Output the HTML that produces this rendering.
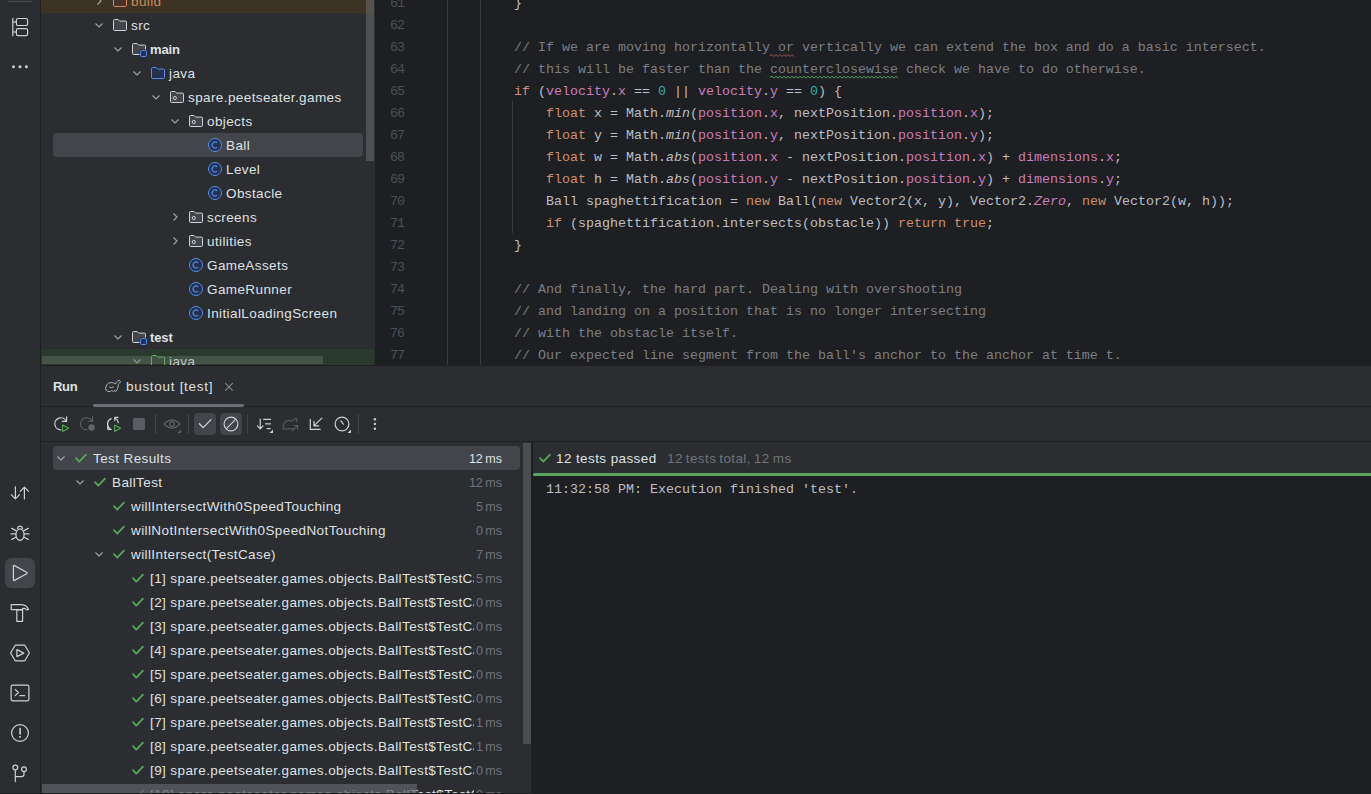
<!DOCTYPE html>
<html><head><meta charset="utf-8">
<style>
*{box-sizing:border-box;margin:0;padding:0}
html,body{width:1371px;height:794px;overflow:hidden;background:#2b2d30;font-family:"Liberation Sans",sans-serif;position:relative}
.abs{position:absolute}
svg{position:absolute;overflow:visible}
.row{position:absolute;height:24px;line-height:26px;font-size:13.5px;letter-spacing:0.4px;color:#dfe1e5;white-space:nowrap}
.code{position:absolute;left:75px;height:22px;line-height:24px;font-family:"Liberation Mono",monospace;font-size:13.33px;color:#bcbec4;white-space:pre}
.ln{position:absolute;left:0;width:31px;text-align:right;height:22px;line-height:24px;font-family:"Liberation Mono",monospace;font-size:13.33px;color:#4b5059;white-space:pre}
.k{color:#cf8e6d}.f{color:#c77dbb}.n{color:#2aacb8}.c{color:#7a7e85}.i{font-style:italic}
.tm{position:absolute;height:24px;line-height:26px;font-size:12.5px;color:#6f737a;white-space:nowrap;text-align:right;word-spacing:-3px;background:#2b2d30;padding-left:2px}
</style></head><body>

<div class="abs" style="left:0;top:0;width:40px;height:794px;background:#2b2d30"></div>
<div class="abs" style="left:40px;top:0;width:1px;height:794px;background:#1e1f22"></div>
<div class="abs" style="left:41px;top:0;width:334px;height:365px;background:#2b2d30;overflow:hidden">
<div class="abs" style="left:0;top:0;width:333px;height:13px;background:#3d3325"></div>
<div class="abs" style="left:0;top:349px;width:333px;height:16px;background:#2a3a2c"></div>
<div class="abs" style="left:12px;top:133px;width:310px;height:24px;background:#43454a;border-radius:4px"></div>
<svg style="left:55.5px;top:-3px" width="5" height="8"><path d="M0.5 0.5L4 4L0.5 7.5" fill="none" stroke="#a0a4ab" stroke-width="1.1"/></svg>
<svg style="left:71px;top:-7px" width="16" height="16" viewBox="0 0 16 16"><path d="M1.5 3.5a1 1 0 0 1 1-1h3.6l1.6 1.6h5.8a1 1 0 0 1 1 1v7.4a1 1 0 0 1-1 1h-11a1 1 0 0 1-1-1z" fill="#45322b" stroke="#d88b5e" stroke-width="1"/></svg>
<div class="row" style="left:90px;top:-11px;color:#cf8a5c;">build</div>
<svg style="left:54px;top:22.5px" width="8" height="5"><path d="M0.5 0.5L4 4L7.5 0.5" fill="none" stroke="#a0a4ab" stroke-width="1.1"/></svg>
<svg style="left:71px;top:17px" width="16" height="16" viewBox="0 0 16 16"><path d="M1.5 3.5a1 1 0 0 1 1-1h3.6l1.6 1.6h5.8a1 1 0 0 1 1 1v7.4a1 1 0 0 1-1 1h-11a1 1 0 0 1-1-1z" fill="#43454a" stroke="#ced0d6" stroke-width="1"/></svg>
<div class="row" style="left:90px;top:13px;">src</div>
<svg style="left:73px;top:46.5px" width="8" height="5"><path d="M0.5 0.5L4 4L7.5 0.5" fill="none" stroke="#a0a4ab" stroke-width="1.1"/></svg>
<svg style="left:90px;top:41px" width="16" height="16" viewBox="0 0 16 16"><path d="M1.5 3.5a1 1 0 0 1 1-1h3.6l1.6 1.6h5.8a1 1 0 0 1 1 1v7.4a1 1 0 0 1-1 1h-11a1 1 0 0 1-1-1z" fill="#43454a" stroke="#ced0d6" stroke-width="1"/><rect x="8.5" y="8.5" width="7.5" height="7.5" rx="1.5" fill="#2b2d30"/><rect x="9.5" y="9.5" width="6" height="6" rx="1.2" fill="#25324d" stroke="#548af7" stroke-width="1"/></svg>
<div class="row" style="left:109px;top:37px;font-weight:700;font-size:13px;letter-spacing:-0.1px;">main</div>
<svg style="left:92px;top:70.5px" width="8" height="5"><path d="M0.5 0.5L4 4L7.5 0.5" fill="none" stroke="#a0a4ab" stroke-width="1.1"/></svg>
<svg style="left:109px;top:65px" width="16" height="16" viewBox="0 0 16 16"><path d="M1.5 3.5a1 1 0 0 1 1-1h3.6l1.6 1.6h5.8a1 1 0 0 1 1 1v7.4a1 1 0 0 1-1 1h-11a1 1 0 0 1-1-1z" fill="#25324d" stroke="#548af7" stroke-width="1"/></svg>
<div class="row" style="left:128px;top:61px;">java</div>
<svg style="left:111px;top:94.5px" width="8" height="5"><path d="M0.5 0.5L4 4L7.5 0.5" fill="none" stroke="#a0a4ab" stroke-width="1.1"/></svg>
<svg style="left:128px;top:89px" width="16" height="16" viewBox="0 0 16 16"><path d="M1.5 3.5a1 1 0 0 1 1-1h3.6l1.6 1.6h5.8a1 1 0 0 1 1 1v7.4a1 1 0 0 1-1 1h-11a1 1 0 0 1-1-1z" fill="#43454a" stroke="#ced0d6" stroke-width="1"/><circle cx="5.8" cy="9" r="1.6" fill="none" stroke="#ced0d6" stroke-width="1"/></svg>
<div class="row" style="left:147px;top:85px;">spare.peetseater.games</div>
<svg style="left:130px;top:118.5px" width="8" height="5"><path d="M0.5 0.5L4 4L7.5 0.5" fill="none" stroke="#a0a4ab" stroke-width="1.1"/></svg>
<svg style="left:147px;top:113px" width="16" height="16" viewBox="0 0 16 16"><path d="M1.5 3.5a1 1 0 0 1 1-1h3.6l1.6 1.6h5.8a1 1 0 0 1 1 1v7.4a1 1 0 0 1-1 1h-11a1 1 0 0 1-1-1z" fill="#43454a" stroke="#ced0d6" stroke-width="1"/><circle cx="5.8" cy="9" r="1.6" fill="none" stroke="#ced0d6" stroke-width="1"/></svg>
<div class="row" style="left:166px;top:109px;">objects</div>
<svg style="left:166px;top:137px" width="16" height="16" viewBox="0 0 16 16"><circle cx="8" cy="8" r="6.5" fill="#25324d" stroke="#548af7" stroke-width="1"/><path d="M10.2 5.8a3 3 0 1 0 0 4.4" fill="none" stroke="#548af7" stroke-width="1.1"/></svg>
<div class="row" style="left:185px;top:133px;">Ball</div>
<svg style="left:166px;top:161px" width="16" height="16" viewBox="0 0 16 16"><circle cx="8" cy="8" r="6.5" fill="#25324d" stroke="#548af7" stroke-width="1"/><path d="M10.2 5.8a3 3 0 1 0 0 4.4" fill="none" stroke="#548af7" stroke-width="1.1"/></svg>
<div class="row" style="left:185px;top:157px;">Level</div>
<svg style="left:166px;top:185px" width="16" height="16" viewBox="0 0 16 16"><circle cx="8" cy="8" r="6.5" fill="#25324d" stroke="#548af7" stroke-width="1"/><path d="M10.2 5.8a3 3 0 1 0 0 4.4" fill="none" stroke="#548af7" stroke-width="1.1"/></svg>
<div class="row" style="left:185px;top:181px;">Obstacle</div>
<svg style="left:131.5px;top:213px" width="5" height="8"><path d="M0.5 0.5L4 4L0.5 7.5" fill="none" stroke="#a0a4ab" stroke-width="1.1"/></svg>
<svg style="left:147px;top:209px" width="16" height="16" viewBox="0 0 16 16"><path d="M1.5 3.5a1 1 0 0 1 1-1h3.6l1.6 1.6h5.8a1 1 0 0 1 1 1v7.4a1 1 0 0 1-1 1h-11a1 1 0 0 1-1-1z" fill="#43454a" stroke="#ced0d6" stroke-width="1"/><circle cx="5.8" cy="9" r="1.6" fill="none" stroke="#ced0d6" stroke-width="1"/></svg>
<div class="row" style="left:166px;top:205px;">screens</div>
<svg style="left:131.5px;top:237px" width="5" height="8"><path d="M0.5 0.5L4 4L0.5 7.5" fill="none" stroke="#a0a4ab" stroke-width="1.1"/></svg>
<svg style="left:147px;top:233px" width="16" height="16" viewBox="0 0 16 16"><path d="M1.5 3.5a1 1 0 0 1 1-1h3.6l1.6 1.6h5.8a1 1 0 0 1 1 1v7.4a1 1 0 0 1-1 1h-11a1 1 0 0 1-1-1z" fill="#43454a" stroke="#ced0d6" stroke-width="1"/><circle cx="5.8" cy="9" r="1.6" fill="none" stroke="#ced0d6" stroke-width="1"/></svg>
<div class="row" style="left:166px;top:229px;">utilities</div>
<svg style="left:147px;top:257px" width="16" height="16" viewBox="0 0 16 16"><circle cx="8" cy="8" r="6.5" fill="#25324d" stroke="#548af7" stroke-width="1"/><path d="M10.2 5.8a3 3 0 1 0 0 4.4" fill="none" stroke="#548af7" stroke-width="1.1"/></svg>
<div class="row" style="left:166px;top:253px;">GameAssets</div>
<svg style="left:147px;top:281px" width="16" height="16" viewBox="0 0 16 16"><circle cx="8" cy="8" r="6.5" fill="#25324d" stroke="#548af7" stroke-width="1"/><path d="M10.2 5.8a3 3 0 1 0 0 4.4" fill="none" stroke="#548af7" stroke-width="1.1"/></svg>
<div class="row" style="left:166px;top:277px;">GameRunner</div>
<svg style="left:147px;top:305px" width="16" height="16" viewBox="0 0 16 16"><circle cx="8" cy="8" r="6.5" fill="#25324d" stroke="#548af7" stroke-width="1"/><path d="M10.2 5.8a3 3 0 1 0 0 4.4" fill="none" stroke="#548af7" stroke-width="1.1"/></svg>
<div class="row" style="left:166px;top:301px;">InitialLoadingScreen</div>
<svg style="left:73px;top:334.5px" width="8" height="5"><path d="M0.5 0.5L4 4L7.5 0.5" fill="none" stroke="#a0a4ab" stroke-width="1.1"/></svg>
<svg style="left:90px;top:329px" width="16" height="16" viewBox="0 0 16 16"><path d="M1.5 3.5a1 1 0 0 1 1-1h3.6l1.6 1.6h5.8a1 1 0 0 1 1 1v7.4a1 1 0 0 1-1 1h-11a1 1 0 0 1-1-1z" fill="#43454a" stroke="#ced0d6" stroke-width="1"/><rect x="8.5" y="8.5" width="7.5" height="7.5" rx="1.5" fill="#2b2d30"/><rect x="9.5" y="9.5" width="6" height="6" rx="1.2" fill="#25324d" stroke="#548af7" stroke-width="1"/></svg>
<div class="row" style="left:109px;top:325px;font-weight:700;font-size:13px;letter-spacing:-0.1px;">test</div>
<svg style="left:92px;top:358.5px" width="8" height="5"><path d="M0.5 0.5L4 4L7.5 0.5" fill="none" stroke="#a0a4ab" stroke-width="1.1"/></svg>
<svg style="left:109px;top:353px" width="16" height="16" viewBox="0 0 16 16"><path d="M1.5 3.5a1 1 0 0 1 1-1h3.6l1.6 1.6h5.8a1 1 0 0 1 1 1v7.4a1 1 0 0 1-1 1h-11a1 1 0 0 1-1-1z" fill="#253627" stroke="#5fb865" stroke-width="1"/></svg>
<div class="row" style="left:128px;top:349px;">java</div>
<div class="abs" style="left:1px;top:356px;width:281px;height:8px;background:rgba(120,130,120,0.35)"></div>
<div class="abs" style="left:325px;top:0;width:8px;height:161px;background:rgba(111,113,118,0.5)"></div>
</div>
<div class="abs" style="left:375px;top:0;width:996px;height:365px;background:#1e1f22;overflow:hidden">
<div class="abs" style="left:72px;top:0;width:1px;height:365px;background:#393b40"></div>
<div class="abs" style="left:105px;top:0;width:1px;height:365px;background:#393b40"></div>
<div class="abs" style="left:137px;top:101px;width:1px;height:132px;background:#393b40"></div>
<div class="ln" style="left:1px;width:28px;letter-spacing:-1px;top:-8.2px">61</div>
<div class="code" style="top:-8.2px">        }</div>
<div class="ln" style="left:1px;width:28px;letter-spacing:-1px;top:13.8px">62</div>
<div class="code" style="top:13.8px"></div>
<div class="ln" style="left:1px;width:28px;letter-spacing:-1px;top:35.8px">63</div>
<div class="code" style="top:35.8px">        <span class="c">// If we are moving horizontally or vertically we can extend the box and do a basic intersect.</span></div>
<div class="ln" style="left:1px;width:28px;letter-spacing:-1px;top:57.8px">64</div>
<div class="code" style="top:57.8px">        <span class="c">// this will be faster than the counterclosewise check we have to do otherwise.</span></div>
<div class="ln" style="left:1px;width:28px;letter-spacing:-1px;top:79.8px">65</div>
<div class="code" style="top:79.8px">        <span class="k">if</span> (<span class="f">velocity</span>.<span class="f">x</span> == <span class="n">0</span> || <span class="f">velocity</span>.<span class="f">y</span> == <span class="n">0</span>) {</div>
<div class="ln" style="left:1px;width:28px;letter-spacing:-1px;top:101.8px">66</div>
<div class="code" style="top:101.8px">            <span class="k">float</span> x = Math.<span class="i">min</span>(<span class="f">position</span>.<span class="f">x</span>, nextPosition.<span class="f">position</span>.<span class="f">x</span>);</div>
<div class="ln" style="left:1px;width:28px;letter-spacing:-1px;top:123.80000000000001px">67</div>
<div class="code" style="top:123.80000000000001px">            <span class="k">float</span> y = Math.<span class="i">min</span>(<span class="f">position</span>.<span class="f">y</span>, nextPosition.<span class="f">position</span>.<span class="f">y</span>);</div>
<div class="ln" style="left:1px;width:28px;letter-spacing:-1px;top:145.8px">68</div>
<div class="code" style="top:145.8px">            <span class="k">float</span> w = Math.<span class="i">abs</span>(<span class="f">position</span>.<span class="f">x</span> - nextPosition.<span class="f">position</span>.<span class="f">x</span>) + <span class="f">dimensions</span>.<span class="f">x</span>;</div>
<div class="ln" style="left:1px;width:28px;letter-spacing:-1px;top:167.8px">69</div>
<div class="code" style="top:167.8px">            <span class="k">float</span> h = Math.<span class="i">abs</span>(<span class="f">position</span>.<span class="f">y</span> - nextPosition.<span class="f">position</span>.<span class="f">y</span>) + <span class="f">dimensions</span>.<span class="f">y</span>;</div>
<div class="ln" style="left:1px;width:28px;letter-spacing:-1px;top:189.8px">70</div>
<div class="code" style="top:189.8px">            Ball spaghettification = <span class="k">new</span> Ball(<span class="k">new</span> Vector2(x, y), Vector2.<span class="f i">Zero</span>, <span class="k">new</span> Vector2(w, h));</div>
<div class="ln" style="left:1px;width:28px;letter-spacing:-1px;top:211.8px">71</div>
<div class="code" style="top:211.8px">            <span class="k">if</span> (spaghettification.intersects(obstacle)) <span class="k">return true</span>;</div>
<div class="ln" style="left:1px;width:28px;letter-spacing:-1px;top:233.8px">72</div>
<div class="code" style="top:233.8px">        }</div>
<div class="ln" style="left:1px;width:28px;letter-spacing:-1px;top:255.8px">73</div>
<div class="code" style="top:255.8px"></div>
<div class="ln" style="left:1px;width:28px;letter-spacing:-1px;top:277.8px">74</div>
<div class="code" style="top:277.8px">        <span class="c">// And finally, the hard part. Dealing with overshooting</span></div>
<div class="ln" style="left:1px;width:28px;letter-spacing:-1px;top:299.8px">75</div>
<div class="code" style="top:299.8px">        <span class="c">// and landing on a position that is no longer intersecting</span></div>
<div class="ln" style="left:1px;width:28px;letter-spacing:-1px;top:321.8px">76</div>
<div class="code" style="top:321.8px">        <span class="c">// with the obstacle itself.</span></div>
<div class="ln" style="left:1px;width:28px;letter-spacing:-1px;top:343.8px">77</div>
<div class="code" style="top:343.8px">        <span class="c">// Our expected line segment from the ball's anchor to the anchor at time t.</span></div>
<svg style="left:0;top:0" width="997" height="365"><path d="M395 55.5L397 54.5L399 56.5L401 54.5L403 56.5L405 54.5L407 56.5L409 54.5L411 56.5L413 54.5L415 56.5L417 54.5L419 56.5" fill="none" stroke="#a8545a" stroke-width="1"/></svg>
<svg style="left:0;top:0" width="997" height="365"><path d="M395 77.2L397 76.2L399 78.2L401 76.2L403 78.2L405 76.2L407 78.2L409 76.2L411 78.2L413 76.2L415 78.2L417 76.2L419 78.2L421 76.2L423 78.2L425 76.2L427 78.2L429 76.2L431 78.2L433 76.2L435 78.2L437 76.2L439 78.2L441 76.2L443 78.2L445 76.2L447 78.2L449 76.2L451 78.2L453 76.2L455 78.2L457 76.2L459 78.2L461 76.2L463 78.2L465 76.2L467 78.2L469 76.2L471 78.2L473 76.2L475 78.2L477 76.2L479 78.2L481 76.2L483 78.2L485 76.2L487 78.2L489 76.2L491 78.2L493 76.2L495 78.2L497 76.2L499 78.2L501 76.2L503 78.2L505 76.2L507 78.2L509 76.2L511 78.2L513 76.2L515 78.2L517 76.2L519 78.2L521 76.2L523 78.2" fill="none" stroke="#5ba56a" stroke-width="1"/></svg>
</div>
<div class="abs" style="left:41px;top:365px;width:1330px;height:1px;background:#1e1f22"></div>
<div class="abs" style="left:41px;top:366px;width:1330px;height:428px;background:#2b2d30;overflow:hidden">
<div class="row" style="left:12px;top:8px;font-weight:700;font-size:13px;letter-spacing:-0.3px">Run</div>
<div class="row" style="left:85px;top:8px;letter-spacing:0.7px">bustout [test]</div>
<div class="abs" style="left:0;top:40px;width:1330px;height:1px;background:#1e1f22"></div>
<div class="abs" style="left:52px;top:38px;width:151px;height:3px;border-radius:2px;background:#6b6e75"></div>
<div class="abs" style="left:0;top:75px;width:1330px;height:1px;background:#1e1f22"></div>
<div class="abs" style="left:153px;top:47px;width:22px;height:22px;border-radius:4px;background:#43454a"></div>
<div class="abs" style="left:179px;top:47px;width:22px;height:22px;border-radius:4px;background:#43454a"></div>
<div class="abs" style="left:490px;top:76px;width:2px;height:400px;background:#1e1f22"></div>
<div class="abs" style="left:492px;top:110px;width:900px;height:400px;background:#1e1f22"></div>
<div class="abs" style="left:492px;top:107px;width:900px;height:3px;border-radius:2px 0 0 2px;background:#58a55f"></div>
<div class="row" style="left:515px;top:80px">12 tests passed</div>
<div class="row" style="left:626px;top:80px;color:#6f737a;word-spacing:-1.2px">12 tests total, 12 ms</div>
<svg style="left:497.50000000000006px;top:87px" width="12" height="10"><path d="M1 5.2L4.3 8.6L10.9 1.6" fill="none" stroke="#58a660" stroke-width="1.8" stroke-linecap="round" stroke-linejoin="round"/></svg>
<div class="code" style="left:505px;top:111.5px;color:#bcbec4">11:32:58 PM: Execution finished 'test'.</div>
<div class="abs" style="left:12px;top:80px;width:467px;height:24px;border-radius:4px;background:#43454a"></div>
<svg style="left:16px;top:89.5px" width="8" height="5"><path d="M0.5 0.5L4 4L7.5 0.5" fill="none" stroke="#a0a4ab" stroke-width="1.1"/></svg>
<svg style="left:34.3px;top:87px" width="12" height="10"><path d="M1 5.2L4.3 8.6L10.9 1.6" fill="none" stroke="#58a660" stroke-width="1.8" stroke-linecap="round" stroke-linejoin="round"/></svg>
<div class="row" style="left:52px;top:80px;width:381px;overflow:hidden">Test Results</div>
<div class="tm" style="right:869px;top:80px;color:#dfe1e5;background:#43454a">12 ms</div>
<svg style="left:35px;top:113.5px" width="8" height="5"><path d="M0.5 0.5L4 4L7.5 0.5" fill="none" stroke="#a0a4ab" stroke-width="1.1"/></svg>
<svg style="left:53.3px;top:111px" width="12" height="10"><path d="M1 5.2L4.3 8.6L10.9 1.6" fill="none" stroke="#58a660" stroke-width="1.8" stroke-linecap="round" stroke-linejoin="round"/></svg>
<div class="row" style="left:71px;top:104px;width:362px;overflow:hidden">BallTest</div>
<div class="tm" style="right:869px;top:104px;color:#6f737a;background:#2b2d30">12 ms</div>
<svg style="left:72.3px;top:135px" width="12" height="10"><path d="M1 5.2L4.3 8.6L10.9 1.6" fill="none" stroke="#58a660" stroke-width="1.8" stroke-linecap="round" stroke-linejoin="round"/></svg>
<div class="row" style="left:90px;top:128px;width:343px;overflow:hidden">willIntersectWith0SpeedTouching</div>
<div class="tm" style="right:869px;top:128px;color:#6f737a;background:#2b2d30">5 ms</div>
<svg style="left:72.3px;top:159px" width="12" height="10"><path d="M1 5.2L4.3 8.6L10.9 1.6" fill="none" stroke="#58a660" stroke-width="1.8" stroke-linecap="round" stroke-linejoin="round"/></svg>
<div class="row" style="left:90px;top:152px;width:343px;overflow:hidden">willNotIntersectWith0SpeedNotTouching</div>
<div class="tm" style="right:869px;top:152px;color:#6f737a;background:#2b2d30">0 ms</div>
<svg style="left:54px;top:185.5px" width="8" height="5"><path d="M0.5 0.5L4 4L7.5 0.5" fill="none" stroke="#a0a4ab" stroke-width="1.1"/></svg>
<svg style="left:72.3px;top:183px" width="12" height="10"><path d="M1 5.2L4.3 8.6L10.9 1.6" fill="none" stroke="#58a660" stroke-width="1.8" stroke-linecap="round" stroke-linejoin="round"/></svg>
<div class="row" style="left:90px;top:176px;width:343px;overflow:hidden">willIntersect(TestCase)</div>
<div class="tm" style="right:869px;top:176px;color:#6f737a;background:#2b2d30">7 ms</div>
<svg style="left:91.3px;top:207px" width="12" height="10"><path d="M1 5.2L4.3 8.6L10.9 1.6" fill="none" stroke="#58a660" stroke-width="1.8" stroke-linecap="round" stroke-linejoin="round"/></svg>
<div class="row" style="left:109px;top:200px;width:324px;overflow:hidden">[1] spare.peetseater.games.objects.BallTest$TestCase</div>
<div class="tm" style="right:869px;top:200px;color:#6f737a;background:#2b2d30">5 ms</div>
<svg style="left:91.3px;top:231px" width="12" height="10"><path d="M1 5.2L4.3 8.6L10.9 1.6" fill="none" stroke="#58a660" stroke-width="1.8" stroke-linecap="round" stroke-linejoin="round"/></svg>
<div class="row" style="left:109px;top:224px;width:324px;overflow:hidden">[2] spare.peetseater.games.objects.BallTest$TestCase</div>
<div class="tm" style="right:869px;top:224px;color:#6f737a;background:#2b2d30">0 ms</div>
<svg style="left:91.3px;top:255px" width="12" height="10"><path d="M1 5.2L4.3 8.6L10.9 1.6" fill="none" stroke="#58a660" stroke-width="1.8" stroke-linecap="round" stroke-linejoin="round"/></svg>
<div class="row" style="left:109px;top:248px;width:324px;overflow:hidden">[3] spare.peetseater.games.objects.BallTest$TestCase</div>
<div class="tm" style="right:869px;top:248px;color:#6f737a;background:#2b2d30">0 ms</div>
<svg style="left:91.3px;top:279px" width="12" height="10"><path d="M1 5.2L4.3 8.6L10.9 1.6" fill="none" stroke="#58a660" stroke-width="1.8" stroke-linecap="round" stroke-linejoin="round"/></svg>
<div class="row" style="left:109px;top:272px;width:324px;overflow:hidden">[4] spare.peetseater.games.objects.BallTest$TestCase</div>
<div class="tm" style="right:869px;top:272px;color:#6f737a;background:#2b2d30">0 ms</div>
<svg style="left:91.3px;top:303px" width="12" height="10"><path d="M1 5.2L4.3 8.6L10.9 1.6" fill="none" stroke="#58a660" stroke-width="1.8" stroke-linecap="round" stroke-linejoin="round"/></svg>
<div class="row" style="left:109px;top:296px;width:324px;overflow:hidden">[5] spare.peetseater.games.objects.BallTest$TestCase</div>
<div class="tm" style="right:869px;top:296px;color:#6f737a;background:#2b2d30">0 ms</div>
<svg style="left:91.3px;top:327px" width="12" height="10"><path d="M1 5.2L4.3 8.6L10.9 1.6" fill="none" stroke="#58a660" stroke-width="1.8" stroke-linecap="round" stroke-linejoin="round"/></svg>
<div class="row" style="left:109px;top:320px;width:324px;overflow:hidden">[6] spare.peetseater.games.objects.BallTest$TestCase</div>
<div class="tm" style="right:869px;top:320px;color:#6f737a;background:#2b2d30">0 ms</div>
<svg style="left:91.3px;top:351px" width="12" height="10"><path d="M1 5.2L4.3 8.6L10.9 1.6" fill="none" stroke="#58a660" stroke-width="1.8" stroke-linecap="round" stroke-linejoin="round"/></svg>
<div class="row" style="left:109px;top:344px;width:324px;overflow:hidden">[7] spare.peetseater.games.objects.BallTest$TestCase</div>
<div class="tm" style="right:869px;top:344px;color:#6f737a;background:#2b2d30">1 ms</div>
<svg style="left:91.3px;top:375px" width="12" height="10"><path d="M1 5.2L4.3 8.6L10.9 1.6" fill="none" stroke="#58a660" stroke-width="1.8" stroke-linecap="round" stroke-linejoin="round"/></svg>
<div class="row" style="left:109px;top:368px;width:324px;overflow:hidden">[8] spare.peetseater.games.objects.BallTest$TestCase</div>
<div class="tm" style="right:869px;top:368px;color:#6f737a;background:#2b2d30">1 ms</div>
<svg style="left:91.3px;top:399px" width="12" height="10"><path d="M1 5.2L4.3 8.6L10.9 1.6" fill="none" stroke="#58a660" stroke-width="1.8" stroke-linecap="round" stroke-linejoin="round"/></svg>
<div class="row" style="left:109px;top:392px;width:324px;overflow:hidden">[9] spare.peetseater.games.objects.BallTest$TestCase</div>
<div class="tm" style="right:869px;top:392px;color:#6f737a;background:#2b2d30">0 ms</div>
<svg style="left:91.3px;top:423px" width="12" height="10"><path d="M1 5.2L4.3 8.6L10.9 1.6" fill="none" stroke="#58a660" stroke-width="1.8" stroke-linecap="round" stroke-linejoin="round"/></svg>
<div class="row" style="left:109px;top:416px;width:324px;overflow:hidden">[10] spare.peetseater.games.objects.BallTest$TestCase</div>
<div class="tm" style="right:869px;top:416px;color:#6f737a;background:#2b2d30">0 ms</div>
<div class="abs" style="left:482px;top:77px;width:8px;height:301px;background:#4b4d51"></div>
<div class="abs" style="left:1px;top:418px;width:375px;height:9px;background:rgba(96,99,104,0.72)"></div>
</div>
<div class="abs" style="left:8px;top:1px;width:24px;height:1px;background:#4a4c51"></div>
<svg style="left:0px;top:0px" width="40" height="80" viewBox="0 0 40 80"><g fill="none" stroke="#ced0d6" stroke-width="1.2"><path d="M12.8 17.9V36.2"/><path d="M12.8 22H16"/><path d="M12.8 32H16"/><rect x="16.4" y="18.5" width="11.2" height="7" rx="1.6"/><rect x="16.4" y="28.6" width="11.2" height="7" rx="1.6"/></g><g fill="#ced0d6"><circle cx="13.5" cy="66.8" r="1.5"/><circle cx="20" cy="66.8" r="1.5"/><circle cx="26.4" cy="66.8" r="1.5"/></g></svg>
<div class="abs" style="left:5px;top:558px;width:30px;height:30px;border-radius:6px;background:#43454a"></div>
<svg style="left:0px;top:0px" width="40" height="794" viewBox="0 0 40 794"><g fill="none" stroke="#ced0d6" stroke-width="1.2" stroke-linecap="round" stroke-linejoin="round"><path d="M15.4 486.8V498.8M11.3 494.6L15.4 498.8L19.5 494.6"/><path d="M24.4 487.2V499M20.3 491.3L24.4 487.2L28.5 491.3"/><path d="M17.5 528.3A2.6 2.6 0 0 1 22.6 528.3"/><ellipse cx="20" cy="534.6" rx="4.1" ry="5.8"/><path d="M11.8 528.4L15.9 530.6M11 533.8H15.8M11.8 539.4L15.9 537.2"/><path d="M28.2 528.4L24.1 530.6M29 533.8H24.2M28.2 539.4L24.1 537.2"/><path d="M13.4 566.3Q13.4 565 14.5 565.6L26.7 572.2Q27.6 573 26.7 573.8L14.5 580.4Q13.4 581 13.4 579.7Z"/><path d="M11.2 604.6H20.5Q26.5 604.6 28.6 609.4L26.8 609.8Q25 607.8 22.6 608.6V609.6H11.2Z"/><path d="M16.8 609.8H22.6V621.3H16.8Z"/><path d="M15.2 645.2H24.8L29.4 653L24.8 660.8H15.2L10.6 653Z"/><path d="M16.9 649.6V656.6L23.8 653.1Z"/><rect x="11.1" y="685.2" width="17.8" height="15.6" rx="1.6"/><path d="M15.2 689.4L18.4 692.5L15.2 695.6M19.8 695.7H24.6"/><circle cx="20" cy="733" r="8.4"/></g><g fill="#ced0d6"><rect x="19.3" y="727.8" width="1.6" height="6.8"/><rect x="19.2" y="736" width="1.7" height="1.7"/></g><g fill="none" stroke="#ced0d6" stroke-width="1.2" stroke-linecap="round" stroke-linejoin="round"><circle cx="15.3" cy="767.6" r="2.4"/><circle cx="24" cy="769.3" r="2.4"/><path d="M15.3 770V781.6M24 771.7V774.2Q24 776.6 21.6 776.6H15.3"/></g></svg>
<svg style="left:0px;top:0px" width="1371" height="794" viewBox="0 0 1371 794"><g fill="none" stroke="#ced0d6" stroke-width="1" stroke-linejoin="round" stroke-linecap="round" opacity="0.85"><g transform="translate(105,378)"><path d="M0.8 11.5C0.2 8.2 2.2 4.6 6.2 4.6C8.2 4.6 9.6 5.2 10.6 5.9C11.4 4.2 12.6 2.4 14.2 2.4C15.6 2.6 15.8 4.2 14.6 5C13.6 5.6 13.2 6.4 13.2 7.4C13.1 9.6 12.2 11.8 10.8 13.6L9.8 12.4C8.8 13.4 7.4 13.4 6.4 12.6L5.4 13.6C3.4 13.8 1.6 13.2 0.8 11.5Z"/><path d="M4.6 9.2Q6.2 10.6 8.4 9"/></g></g><path d="M225.3 383.2L232.7 390.6M232.7 383.2L225.3 390.6" stroke="#868a91" stroke-width="1.1" fill="none"/></svg>
<svg style="left:0px;top:0px" width="1371" height="794" viewBox="0 0 1371 794"><rect x="155.0" y="414" width="1" height="20" fill="#43454a"/><rect x="188.0" y="414" width="1" height="20" fill="#43454a"/><rect x="247.0" y="414" width="1" height="20" fill="#43454a"/><rect x="358.0" y="414" width="1" height="20" fill="#43454a"/><g fill="none" stroke="#ced0d6" stroke-width="1.2" stroke-linecap="round" stroke-linejoin="round"><path d="M66.2 421.2A6 6 0 1 0 60.8 429.8"/><path d="M66.6 416.8V421.3H62.3"/></g><path d="M62.6 425V431.5L68.6 428.2Z" fill="#253627" stroke="#55a45c" stroke-width="1.1" stroke-linejoin="round"/><g fill="none" stroke="#626469" stroke-width="1.1" stroke-linecap="round"><path d="M92 421.2A6 6 0 1 0 86.8 429.8"/><path d="M92.6 416.8V421.3H88.3"/></g><circle cx="91.6" cy="427.6" r="3.3" fill="#626469"/><g fill="none" stroke="#ced0d6" stroke-width="1.2" stroke-linecap="round" stroke-linejoin="round"><path d="M111.2 418.6A5.8 5.8 0 0 0 109.8 428.6"/><path d="M107.8 425.8V429.4H111.2"/><path d="M115.6 418.4A5.8 5.8 0 0 1 118.3 422.6"/><path d="M114.8 420.6V417.4H118"/></g><path d="M114.6 425V431.5L120.6 428.2Z" fill="#253627" stroke="#55a45c" stroke-width="1.1" stroke-linejoin="round"/><rect x="133" y="418" width="12" height="12" rx="1.8" fill="#5a5d63"/><g fill="none" stroke="#626469" stroke-width="1.1"><path d="M164.2 424Q172 415.8 179.8 424Q172 432.2 164.2 424Z"/><circle cx="172" cy="424" r="2.4"/></g><path d="M181 429.5V433H177.5Z" fill="#626469"/><path d="M199.4 423.8L203.2 427.6L211 419.6" fill="none" stroke="#ced0d6" stroke-width="1.3" stroke-linecap="round" stroke-linejoin="round"/><circle cx="231" cy="424" r="6.9" fill="none" stroke="#ced0d6" stroke-width="1.1"/><path d="M226.2 428.8L235.8 419.2" stroke="#ced0d6" stroke-width="1.1"/><g fill="none" stroke="#ced0d6" stroke-width="1.2" stroke-linecap="round" stroke-linejoin="round"><path d="M260.2 419.2V428.6M257.4 425.9L260.2 428.8L263 425.9M263.6 419.3H270.6M267.2 428.6H270.2"/></g><rect x="265" y="423" width="6" height="1.6" fill="#a0a4ab"/><path d="M273 429.5V433H269.5Z" fill="#ced0d6"/><g fill="none" stroke="#626469" stroke-width="1" stroke-linejoin="round" stroke-linecap="round"><path d="M283.2 429Q282 425 285 421.8Q288 419.4 292 421.2Q293.8 418 296.8 418.6Q297.8 420.2 296.4 422"/><path d="M284 428.8Q287 430.2 289.2 428.4Q292 430 294 428.6"/><path d="M292 431.2L297.5 425.8M294.2 425.6H297.6V429"/></g><g fill="none" stroke="#ced0d6" stroke-width="1.2" stroke-linecap="round" stroke-linejoin="round"><path d="M310.3 419.3V429.4H320.2M321.8 418.1L314.2 425.7M314 421.3V425.9H318.6"/></g><g fill="none" stroke="#ced0d6" stroke-width="1.2" stroke-linecap="round" stroke-linejoin="round"><circle cx="342" cy="424" r="6.9"/><path d="M340.9 420.8L343.4 424.2"/></g><path d="M351 429.5V433H347.5Z" fill="#ced0d6"/><g fill="#ced0d6"><circle cx="374.9" cy="419.2" r="1.2"/><circle cx="374.9" cy="423.9" r="1.2"/><circle cx="374.9" cy="428.7" r="1.2"/></g></svg>
<div class="abs" style="left:0;top:793px;width:1371px;height:1px;background:#1e1f22"></div>
</body></html>
